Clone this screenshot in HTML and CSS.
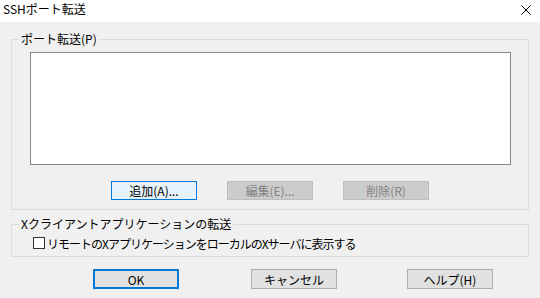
FILE: index.html
```html
<!DOCTYPE html>
<html lang="ja">
<head>
    <meta charset="UTF-8">
    <title>SSHポート転送</title>
    <link rel="stylesheet" href="styles.css">
</head>
<body>
    <div class="titlebar">
        <span class="title">SSHポート転送</span>
        <svg class="close" width="10" height="10" viewBox="0 0 10 10">
            <path d="M0.5 0.5 L9.5 9.5 M9.5 0.5 L0.5 9.5" stroke="#000" stroke-width="1" fill="none"/>
        </svg>
    </div>

    <div class="dialog">
        <div class="group group-forward">
            <span class="group-label">ポート転送(P)</span>
            <div class="listbox"></div>
            <div class="row-buttons">
                <button class="btn focused">追加(A)...</button>
                <button class="btn" disabled>編集(E)...</button>
                <button class="btn" disabled>削除(R)</button>
            </div>
        </div>

        <div class="group group-x11">
            <span class="group-label">Xクライアントアプリケーションの転送</span>
            <label class="check">
                <span class="box"></span>
                <span class="check-text">リモートのXアプリケーションをローカルのXサーバに表示する</span>
            </label>
        </div>

        <div class="footer">
            <button class="btn default">OK</button>
            <button class="btn">キャンセル</button>
            <button class="btn">ヘルプ(H)</button>
        </div>
    </div>
</body>
</html>
```

FILE: styles.css
```css
* {
    box-sizing: border-box;
}
body {
    margin: 0;
    width: 540px;
    height: 298px;
    overflow: hidden;
    background: #f0f0f0;
    font-family: "Noto Sans CJK JP", "Noto Sans", sans-serif;
    font-size: 12px;
    color: #000;
}
.titlebar {
    height: 22px;
    background: #fff;
    display: flex;
    align-items: flex-start;
    justify-content: space-between;
    padding: 0 9px 0 3px;
}
.title {
    line-height: 17px;
}
.close {
    margin-top: 5px;
}
.dialog {
    padding-top: 17px;
}
.group {
    position: relative;
    margin: 0 11px;
    border: 1px solid #dcdcdc;
}
.group-label {
    position: absolute;
    top: -9px;
    left: 7px;
    padding: 0 2px;
    background: #f0f0f0;
    line-height: 16px;
}
.group-forward {
    height: 171px;
    padding: 12px 0 0 18px;
}
.listbox {
    width: 481px;
    height: 113px;
    background: #fff;
    border: 1px solid #828790;
}
.row-buttons {
    display: flex;
    gap: 30px;
    margin: 16px 0 0 81px;
}
.btn {
    width: 86px;
    height: 19px;
    padding: 0;
    font-family: inherit;
    font-size: 12px;
    line-height: 17px;
    color: #000;
    background: #e1e1e1;
    border: 1px solid #adadad;
    border-radius: 0;
}
.btn:disabled {
    background: #cccccc;
    border-color: #bfbfbf;
    color: #838383;
}
.btn.focused {
    background: #e5f1fb;
    border-color: #0078d7;
}
.btn.default {
    border: 2px solid #0078d7;
    line-height: 15px;
}
.group-x11 {
    margin-top: 14px;
    height: 33px;
    padding: 11px 0 0 21px;
}
.check {
    display: flex;
    align-items: center;
    height: 14px;
}
.box {
    width: 12px;
    height: 12px;
    border: 1px solid #333;
    background: #fff;
    margin-right: 2px;
}
.check-text {
    letter-spacing: -1px;
}
.footer {
    display: flex;
    margin: 12px 0 0 93px;
    gap: 72px;
}
.footer .btn {
    height: 20px;
}
.footer .btn:last-child {
    margin-left: -2px;
}
```
